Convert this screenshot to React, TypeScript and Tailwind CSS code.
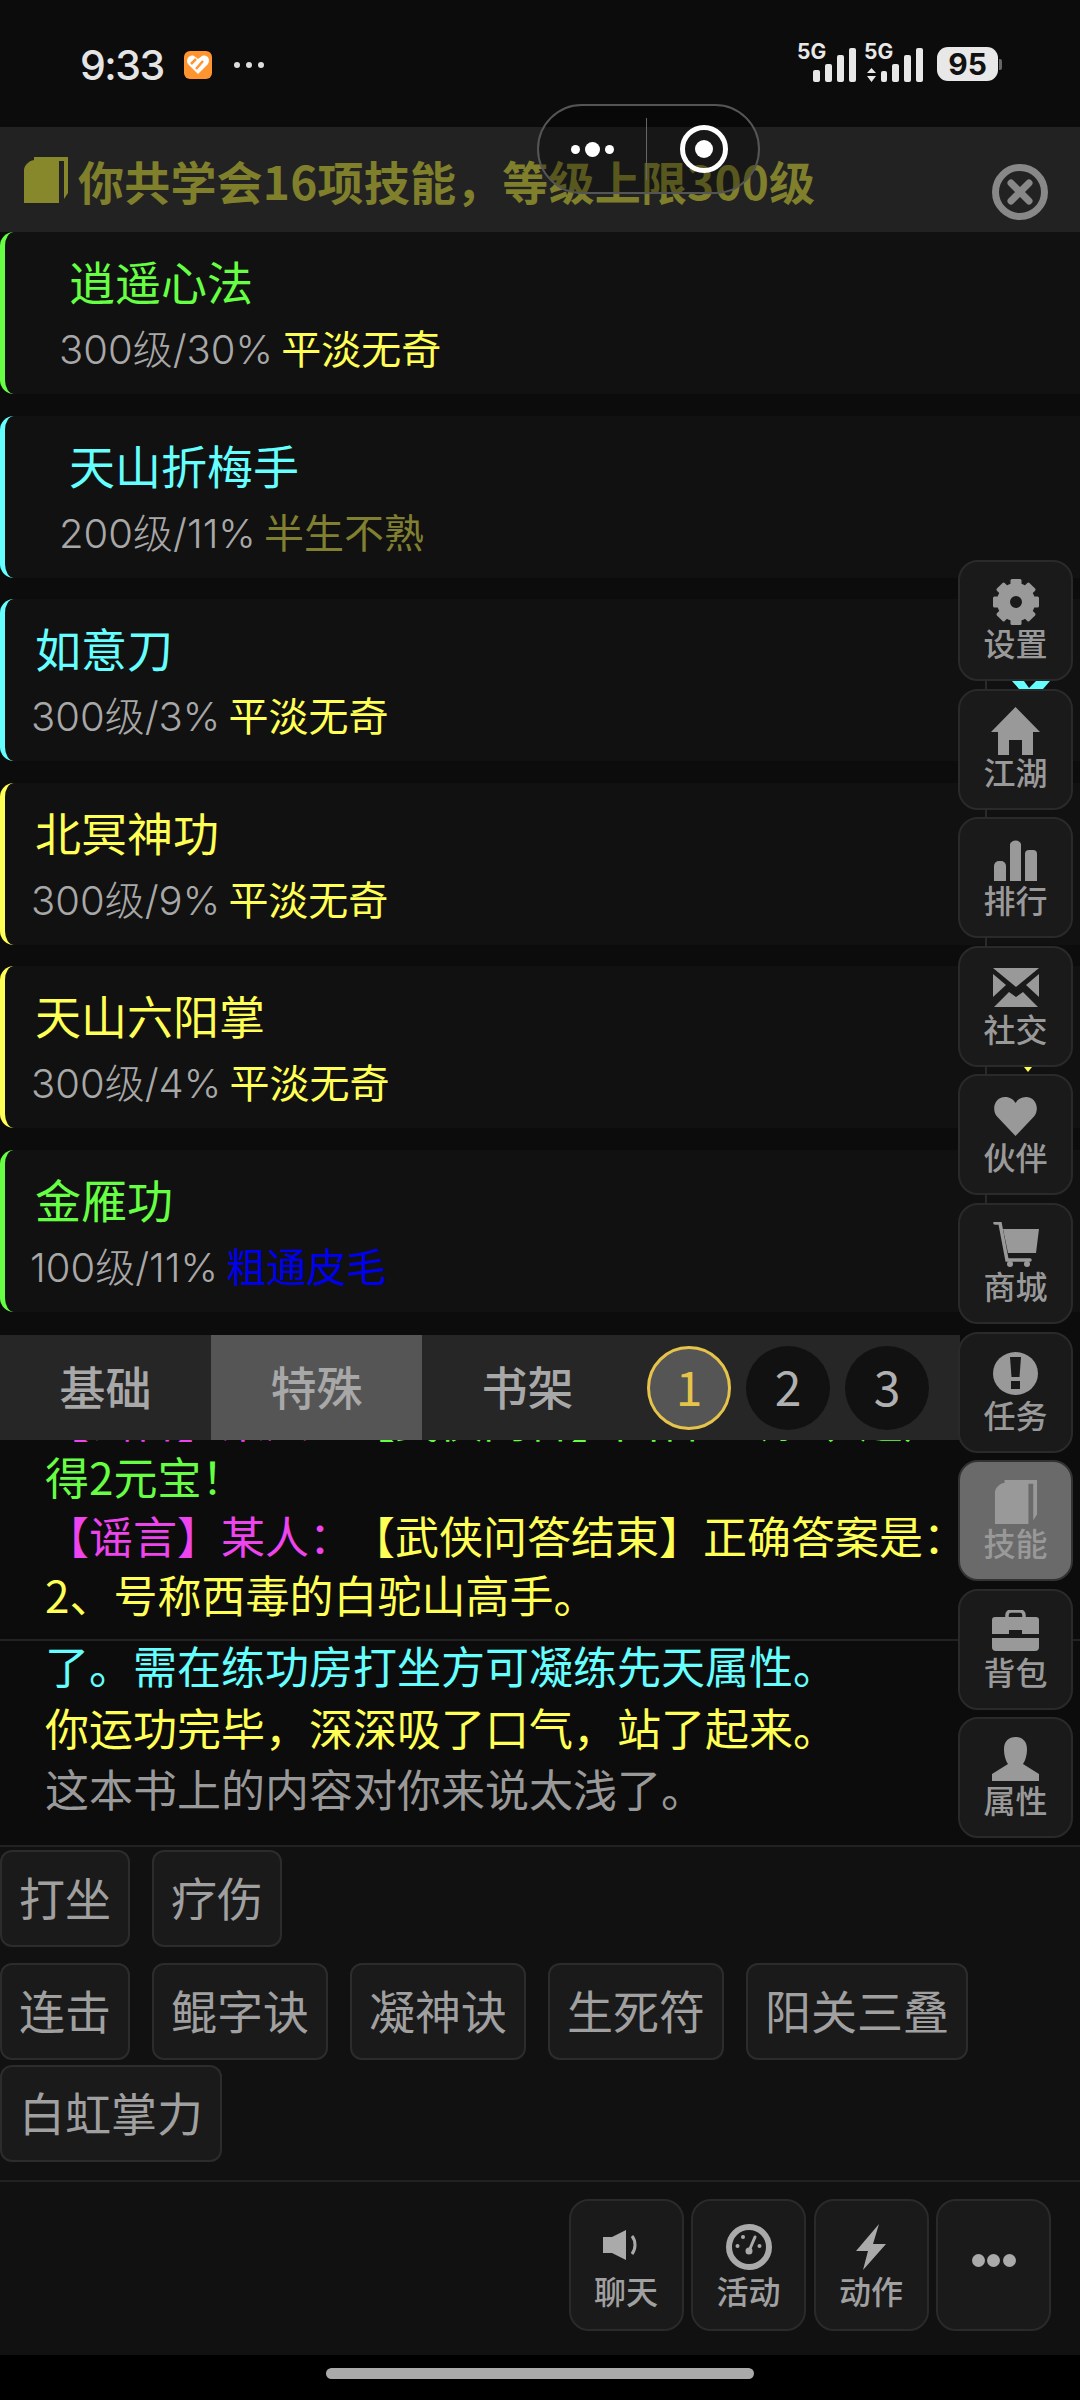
import type { ReactNode } from "react";

const skills = [
  { name: "逍遥心法", level: "300级/30%", rank: "平淡无奇", bar: "border-[#66ff44]", nameColor: "text-[#66ff44]", rankColor: "text-[#ffff55]", nameX: "pl-[64px]", infoX: "pl-[54px]" },
  { name: "天山折梅手", level: "200级/11%", rank: "半生不熟", bar: "border-[#66ffff]", nameColor: "text-[#66ffff]", rankColor: "text-[#808030]", nameX: "pl-[64px]", infoX: "pl-[54px]" },
  { name: "如意刀", level: "300级/3%", rank: "平淡无奇", bar: "border-[#66ffff]", nameColor: "text-[#66ffff]", rankColor: "text-[#ffff55]", nameX: "pl-[30px]", infoX: "pl-[26px]" },
  { name: "北冥神功", level: "300级/9%", rank: "平淡无奇", bar: "border-[#ffff55]", nameColor: "text-[#ffff55]", rankColor: "text-[#ffff55]", nameX: "pl-[30px]", infoX: "pl-[26px]" },
  { name: "天山六阳掌", level: "300级/4%", rank: "平淡无奇", bar: "border-[#ffff55]", nameColor: "text-[#ffff55]", rankColor: "text-[#ffff55]", nameX: "pl-[30px]", infoX: "pl-[26px]" },
  { name: "金雁功", level: "100级/11%", rank: "粗通皮毛", bar: "border-[#66ff44]", nameColor: "text-[#66ff44]", rankColor: "text-[#0000ee]", nameX: "pl-[30px]", infoX: "pl-[25px]" },
];

const GearIcon = () => (
  <svg width="46" height="46" viewBox="0 0 46 46" fill="#999">
    {[0, 45, 90, 135, 180, 225, 270, 315].map((a) => (
      <rect key={a} x="17.500" y="0" width="11" height="12" rx="1.500" transform={`rotate(${a} 23 23)`} />
    ))}
    <circle cx="23" cy="23" r="12.500" fill="none" stroke="#999" strokeWidth="13" />
  </svg>
);

const HomeIcon = () => (
  <svg width="49" height="48" viewBox="0 0 49 48" fill="#999">
    <path d="M24.500 0 49 25H42V48H31V33H18V48H7V25H0Z" />
  </svg>
);

const ChartIcon = () => (
  <svg width="44" height="43" viewBox="0 0 44 43" fill="#999">
    <path d="M0 43V28a5 5 0 0 1 5-5h2a5 5 0 0 1 5 5v15Z" />
    <path d="M16 43V6a6 6 0 0 1 11 0v37Z" />
    <path d="M31 43V16a4 4 0 0 1 4-4h4a4 4 0 0 1 4 4v27Z" />
  </svg>
);

const MailIcon = () => (
  <svg width="46" height="40" viewBox="0 0 46 40" fill="#999">
    <path d="M0 0H46L23 19Z" />
    <path d="M0 6 13 17 0 29Z" />
    <path d="M46 6 33 17 46 29Z" />
    <path d="M1 39 16 24 23 29 30 24 45 39Z" />
  </svg>
);

const HeartIcon = () => (
  <svg width="43" height="39" viewBox="0 0 43 39" fill="#999">
    <path d="M21.500 39 3 19.500C-3 12 1 0 11 0c5 0 8.500 2.500 10.500 6C23.500 2.500 27 0 32 0c10 0 14 12 8 19.500Z" />
  </svg>
);

const CartIcon = () => (
  <svg width="46" height="46" viewBox="0 0 46 46" fill="#999">
    <path d="M10 7H46L43 31H15Z" />
    <path d="M2 1H7L14 38H37" fill="none" stroke="#999" strokeWidth="3.500" strokeLinecap="round" />
    <circle cx="17" cy="42" r="3" />
    <circle cx="34" cy="42" r="3" />
  </svg>
);

const AlertIcon = () => (
  <svg width="45" height="43" viewBox="0 0 45 43">
    <ellipse cx="22.500" cy="21.500" rx="22.500" ry="21.500" fill="#999" />
    <path d="M17 5H28L26.500 25H18.500Z" fill="#1a1a1a" />
    <rect x="18" y="29" width="9" height="8" fill="#1a1a1a" />
  </svg>
);

const BookIcon = ({ color = "#999", size = 44 }: { color?: string; size?: number }) => (
  <svg width={size} height={size} viewBox="0 0 44 46" fill={color}>
    <path d="M0 13C0 8 6 3 11 3H35V46H0Z" />
    <path d="M10 0H44V36L40 42V4H10Z" />
  </svg>
);

const CaseIcon = () => (
  <svg width="47" height="41" viewBox="0 0 47 41" fill="#999">
    <path d="M15 7V5a4 4 0 0 1 4-4h9a4 4 0 0 1 4 4v2" fill="none" stroke="#999" strokeWidth="3.500" />
    <path d="M0 10a3 3 0 0 1 3-3H44a3 3 0 0 1 3 3V24H30V20H17V24H0Z" />
    <path d="M0 28H47V37a4 4 0 0 1-4 4H4a4 4 0 0 1-4-4Z" />
  </svg>
);

const PersonIcon = () => (
  <svg width="47" height="44" viewBox="0 0 47 44" fill="#999">
    <path d="M12 12C12 4 17 0 23.500 0S35 4 35 12C35 19 33 24 31 27L47 37V44H0V37L16 27C14 24 12 19 12 12Z" />
  </svg>
);

const SpeakerIcon = () => (
  <svg className="mr-[12px]" width="35" height="46" viewBox="0 0 35 46" fill="#aaa">
    <path d="M0 13H9L23 6V36L9 29H0Z" />
    <path d="M29 12C33 17 33 25 29 30" fill="none" stroke="#aaa" strokeWidth="3" />
  </svg>
);

const GaugeIcon = () => (
  <svg width="46" height="46" viewBox="0 0 46 46" fill="#aaa">
    <circle cx="23" cy="23" r="20" fill="none" stroke="#aaa" strokeWidth="6" />
    <circle cx="11.500" cy="22" r="2" />
    <circle cx="17" cy="13" r="2" />
    <circle cx="33.500" cy="22" r="2" />
    <circle cx="23" cy="27" r="3.500" />
    <path d="M23 27 29 13" stroke="#aaa" strokeWidth="3" strokeLinecap="round" />
  </svg>
);

const BoltIcon = () => (
  <svg width="30" height="46" viewBox="0 0 30 46" fill="#aaa">
    <path d="M23 0 17 20H30L7 46 12 27H0Z" />
  </svg>
);

const sideButtons: { label: string; icon: ReactNode; active?: boolean }[] = [
  { label: "设置", icon: <GearIcon /> },
  { label: "江湖", icon: <HomeIcon /> },
  { label: "排行", icon: <ChartIcon /> },
  { label: "社交", icon: <MailIcon /> },
  { label: "伙伴", icon: <HeartIcon /> },
  { label: "商城", icon: <CartIcon /> },
  { label: "任务", icon: <AlertIcon /> },
  { label: "技能", icon: <BookIcon />, active: true },
  { label: "背包", icon: <CaseIcon /> },
  { label: "属性", icon: <PersonIcon /> },
];

const bottomButtons = [
  { label: "聊天", icon: <SpeakerIcon /> },
  { label: "活动", icon: <GaugeIcon /> },
  { label: "动作", icon: <BoltIcon /> },
];

function StatusBar() {
  return (
    <div className="h-[127px] shrink-0 flex items-start justify-between pl-[80px] pr-[78px] bg-[#0c0c0c]">
      <div className="flex items-center h-[50px] mt-[40px]">
        <span className="w-[84px] text-[41px] leading-[50px] font-medium text-[#e4e4e4] font-['Inter',sans-serif] tracking-[-1.500px]">9:33</span>
        <svg className="ml-[20px]" width="28" height="28" viewBox="0 0 28 28">
          <rect width="28" height="28" rx="6" fill="#ff9430" />
          <path d="M14 23 4 13C1 8 6 3 10 5L14 8 18 5C23 3 27 8 24 13Z" fill="#fff" />
          <path d="M7 13 12 8M12 18 19 10" stroke="#ff9430" strokeWidth="2.500" />
        </svg>
        <svg className="ml-[21px]" width="32" height="8" viewBox="0 0 32 8" fill="#ddd">
          <circle cx="4" cy="4" r="3" />
          <circle cx="16" cy="4" r="3" />
          <circle cx="28" cy="4" r="3" />
        </svg>
      </div>
      <div className="flex items-center mt-[40px] h-[46px]">
        <svg width="128" height="46" viewBox="797 40 128 46" fill="#e8e8e8">
          <text x="797" y="59" fontSize="21" fontWeight="700" fontFamily="Inter, sans-serif">5G</text>
          <rect x="813" y="70" width="7" height="12" rx="2" />
          <rect x="825" y="64" width="7" height="18" rx="2" />
          <rect x="837" y="55" width="7" height="27" rx="2" />
          <rect x="849" y="48" width="7" height="34" rx="2" />
          <text x="864" y="59" fontSize="21" fontWeight="700" fontFamily="Inter, sans-serif">5G</text>
          <path d="M871.500 68 876 73H867ZM871.500 82 876 76H867Z" />
          <rect x="881" y="71" width="6" height="11" rx="2" />
          <rect x="892" y="64" width="7" height="18" rx="2" />
          <rect x="904" y="55" width="7" height="27" rx="2" />
          <rect x="916" y="48" width="7" height="34" rx="2" />
        </svg>
        <div className="ml-[12px] w-[61px] h-[34px] mt-[2px] rounded-[11px] bg-[#e8e8e8] flex items-center justify-center text-[30px] leading-none font-bold text-[#111] font-['Inter',sans-serif]">95</div>
        <div className="w-[3px] h-[11px] mt-[2px] ml-[1px] rounded-r-[2px] bg-[#666]" />
      </div>
    </div>
  );
}

function Header() {
  return (
    <div className="h-[105px] shrink-0 flex items-center justify-between bg-[#222] pl-[23px] pr-[32px]">
      <div className="flex items-center">
        <BookIcon color="#87872c" size={46} />
        <span className="ml-[9px] text-[46px] leading-[60px] font-bold text-[#7f7f2c] whitespace-nowrap tracking-[0.200px]">你共学会16项技能，等级上限300级</span>
      </div>
      <svg className="mt-[24px]" width="56" height="56" viewBox="0 0 56 56">
        <circle cx="28" cy="28" r="24.500" fill="none" stroke="#888" strokeWidth="7" />
        <path d="M19 19 37 37M37 19 19 37" stroke="#888" strokeWidth="7" strokeLinecap="round" />
      </svg>
    </div>
  );
}

function SkillRow({ skill }: { skill: (typeof skills)[number] }) {
  return (
    <div className={`h-[162px] shrink-0 bg-[#111] border-l-[5px] rounded-l-[14px] pt-[17px] ${skill.bar}`}>
      <div className={`text-[46px] leading-[62px] ${skill.nameColor} ${skill.nameX}`}>{skill.name}</div>
      <div className={`mt-[5px] text-[40px] leading-[62px] whitespace-nowrap text-[#a8a8a8] font-['Inter','Noto_Sans_CJK_SC',sans-serif] font-light ${skill.infoX}`}>
        {skill.level} <span className={`-ml-[3px] font-['Noto_Sans_CJK_SC',sans-serif] font-normal ${skill.rankColor}`}>{skill.rank}</span>
      </div>
    </div>
  );
}

function Tabs() {
  return (
    <div className="shrink-0 bg-[#0c0c0c]">
      <div className="h-[105px] w-[960px] flex bg-[#262626]">
        {["基础", "特殊", "书架"].map((t) => (
          <div key={t} className={`w-[211px] flex items-center justify-center pb-[6px] text-[46px] leading-[60px] font-medium text-[#a8a8a8] ${t === "特殊" ? "bg-[#555]" : ""}`}>{t}</div>
        ))}
        <div className="flex items-center gap-[15px] ml-[14px]">
          <div className="w-[84px] h-[84px] rounded-full border-[3px] border-[#e6c34a] bg-[#555] flex items-center justify-center pb-[5px] text-[48px] leading-none text-[#e6c34a]">1</div>
          <div className="w-[84px] h-[84px] rounded-full bg-[#111] flex items-center justify-center pb-[5px] text-[48px] leading-none text-[#b0b0b0]">2</div>
          <div className="w-[84px] h-[84px] rounded-full bg-[#111] flex items-center justify-center pb-[5px] text-[48px] leading-none text-[#b0b0b0]">3</div>
        </div>
      </div>
    </div>
  );
}

function ChatLog() {
  return (
    <div className="shrink-0 bg-[#0c0c0c] text-[44px] whitespace-nowrap">
      <div className="h-[199px] overflow-hidden pl-[45px] leading-[59px]">
        {/* scrolled away line, only its feet show under the tabs */}
        <div className="-mt-[50px] h-[57px] text-[#66ff44]">
          <span className="text-[#ee44ee]">【谣言】某人：</span><span className="ml-[20px]">【武侠问答】回答正确（3题）</span>
        </div>
        <div className="text-[#66ff44]">得2元宝！</div>
        <div className="text-[#ffff55]">
          <span className="text-[#ee44ee]">【谣言】某人：</span><span className="ml-[20px]">【武侠问答结束】正确答案是：</span>
        </div>
        <div className="text-[#ffff55]">2、号称西毒的白驼山高手。</div>
      </div>
      <div className="h-[206px] overflow-hidden pl-[45px] leading-[61.500px] border-t-2 border-[#222]">
        <div className="-mt-[6px] text-[#66ffff]">了。需在练功房打坐方可凝练先天属性。</div>
        <div className="text-[#ffff55]">你运功完毕，深深吸了口气，站了起来。</div>
        <div className="text-[#999]">这本书上的内容对你来说太浅了。</div>
      </div>
    </div>
  );
}

function Chip({ label }: { label: string }) {
  return (
    <div className="h-[97px] px-[17px] pb-[6px] flex items-center rounded-[12px] border-2 border-[#2c2c2c] bg-[#1a1a1a] text-[46px] leading-[60px] text-[#a0a0a0] whitespace-nowrap">{label}</div>
  );
}

function ChipPanel() {
  return (
    <div className="h-[335px] shrink-0 bg-[#111] border-t-2 border-[#222] pt-[3px]">
      <div className="flex gap-[22px]">
        {["打坐", "疗伤"].map((c) => <Chip key={c} label={c} />)}
      </div>
      <div className="flex flex-wrap gap-x-[22px] gap-y-[5px] mt-[16px]">
        {["连击", "鲲字诀", "凝神诀", "生死符", "阳关三叠", "白虹掌力"].map((c) => <Chip key={c} label={c} />)}
      </div>
    </div>
  );
}

function BottomBar() {
  return (
    <div className="h-[175px] shrink-0 bg-[#111] border-t-2 border-[#222] pt-[17px] pr-[29px] flex justify-end gap-[7.500px]">
      {bottomButtons.map((b) => (
        <div key={b.label} className="w-[115px] h-[132px] rounded-[20px] border-2 border-[#2a2a2a] bg-[#1a1a1a] flex flex-col items-center pt-[23px]">
          <div className="h-[46px] flex items-center">{b.icon}</div>
          <span className="text-[32px] leading-[40px] font-medium text-[#a0a0a0]">{b.label}</span>
        </div>
      ))}
      <div className="w-[115px] h-[132px] rounded-[20px] border-2 border-[#2a2a2a] bg-[#1a1a1a] flex justify-center gap-[2.500px] pt-[53px]">
        <div className="w-[13px] h-[13px] rounded-full bg-[#aaa]" />
        <div className="w-[13px] h-[13px] rounded-full bg-[#aaa]" />
        <div className="w-[13px] h-[13px] rounded-full bg-[#aaa]" />
      </div>
    </div>
  );
}

export default function App() {
  return (
    <div className="relative w-[1080px] h-[2400px] overflow-hidden flex flex-col bg-black font-['Noto_Sans_CJK_SC','Noto_Sans',sans-serif]">
      <StatusBar />
      <Header />

      <div className="h-[1103px] shrink-0 flex flex-col gap-[21.600px] bg-[#0c0c0c]">
        {skills.map((s) => <SkillRow key={s.name} skill={s} />)}
      </div>

      <Tabs />
      <ChatLog />
      <ChipPanel />
      <BottomBar />

      <div className="flex justify-center pt-[13px]">
        <div className="w-[428px] h-[11px] rounded-full bg-[#aaa]" />
      </div>

      {/* wechat capsule */}
      <div className="absolute left-[537px] top-[104px] w-[223px] h-[90px] rounded-full border-2 border-[#555] bg-black/30 flex items-center">
        <div className="w-[107px] flex items-center justify-center gap-[5px]">
          <div className="w-[9px] h-[9px] rounded-full bg-white" />
          <div className="w-[15px] h-[15px] rounded-full bg-white" />
          <div className="w-[9px] h-[9px] rounded-full bg-white" />
        </div>
        <div className="w-px h-[62px] bg-[#666]" />
        <div className="ml-[33px] w-[48px] h-[48px] rounded-full border-[5px] border-white flex items-center justify-center">
          <div className="w-[18px] h-[18px] rounded-full bg-white" />
        </div>
      </div>

      {/* bits of the list that peek out between the side buttons */}
      <div className="absolute left-[985px] top-[560px] w-[2px] h-[750px] bg-[#2a2a2a]" />
      <svg className="absolute left-[1012px] top-[681px]" width="38" height="8" viewBox="0 0 38 8" fill="#66ffff">
        <path d="M0 0H12L17 7 24 0H38L31 8H7Z" />
      </svg>
      <svg className="absolute left-[1024px] top-[1067px]" width="8" height="5" viewBox="0 0 8 5" fill="#ffff55">
        <path d="M0 0H8L4 5Z" />
      </svg>

      {/* side menu */}
      <div className="absolute left-[958px] top-[560px] w-[115px] flex flex-col gap-[7.600px]">
        {sideButtons.map((b) => (
          <div key={b.label} className={`h-[121px] rounded-[20px] border-2 flex flex-col items-center pt-[17px] ${b.active ? "bg-[#6a6a6a] border-[#333]" : "bg-[#1a1a1a] border-[#2a2a2a]"}`}>
            <div className="h-[46px] flex items-center">{b.icon}</div>
            <span className="-mt-[3px] text-[32px] leading-[40px] font-medium text-[#999]">{b.label}</span>
          </div>
        ))}
      </div>
    </div>
  );
}
